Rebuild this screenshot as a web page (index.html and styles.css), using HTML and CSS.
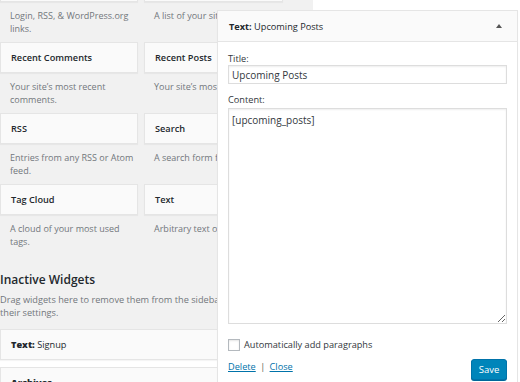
FILE: index.html
```html
<!DOCTYPE html>
<html lang="en">
<head>
  <meta charset="UTF-8" />
  <meta name="viewport" content="width=device-width, initial-scale=1.0" />
  <title>Widgets</title>
  <link rel="stylesheet" href="styles.css">
</head>
<body>
  <div class="page">
    <div class="widgets-area">
      <div class="widget-grid">
        <div class="widget">
          <div class="widget-top">Meta</div>
          <p class="widget-desc">Login, RSS, &amp; WordPress.org links.</p>
        </div>
        <div class="widget">
          <div class="widget-top">Pages</div>
          <p class="widget-desc">A list of your site’s Pages.</p>
        </div>
        <div class="widget">
          <div class="widget-top">Recent Comments</div>
          <p class="widget-desc">Your site’s most recent comments.</p>
        </div>
        <div class="widget">
          <div class="widget-top">Recent Posts</div>
          <p class="widget-desc">Your site’s most recent Posts.</p>
        </div>
        <div class="widget">
          <div class="widget-top">RSS</div>
          <p class="widget-desc">Entries from any RSS or Atom feed.</p>
        </div>
        <div class="widget">
          <div class="widget-top">Search</div>
          <p class="widget-desc">A search form for your site.</p>
        </div>
        <div class="widget">
          <div class="widget-top">Tag Cloud</div>
          <p class="widget-desc">A cloud of your most used tags.</p>
        </div>
        <div class="widget">
          <div class="widget-top">Text</div>
          <p class="widget-desc">Arbitrary text or HTML.</p>
        </div>
      </div>

      <div class="inactive">
        <h2>Inactive Widgets</h2>
        <p class="inactive-desc">Drag widgets here to remove them from the sidebar but keep their settings.</p>
        <div class="widget-top inactive-item"><strong>Text:</strong>&nbsp;<span class="in-title">Signup</span></div>
        <div class="widget-top inactive-item"><strong>Archives</strong></div>
      </div>
    </div>

    <div class="edit-panel">
      <div class="panel-head">
        <span><strong>Text:</strong> <span class="in-title">Upcoming Posts</span></span>
        <span class="arrow"></span>
      </div>
      <div class="panel-body">
        <label class="field-label" for="title">Title:</label>
        <input class="field-input" id="title" type="text" value="Upcoming Posts" />
        <label class="field-label content-label" for="content">Content:</label>
        <textarea class="field-area" id="content">[upcoming_posts]</textarea>
        <label class="auto-p"><input type="checkbox" class="check" /> Automatically add paragraphs</label>
        <div class="panel-actions">
          <div class="links"><a href="#">Delete</a> <span class="sep">|</span> <a href="#">Close</a></div>
          <button class="save-btn">Save</button>
        </div>
      </div>
    </div>
  </div>
</body>
</html>
```

FILE: styles.css
```css
body {
  margin: 0;
  background: #fff;
  font-family: "Open Sans", "Liberation Sans", sans-serif;
  font-size: 9.2px;
  color: #444;
}

.page {
  position: relative;
  height: 382px;
  overflow: hidden;
}

.widgets-area {
  width: 313px;
  height: 382px;
  background: #f1f1f1;
}

.widget-grid {
  display: grid;
  grid-template-columns: 138px 139px;
  column-gap: 6px;
  margin-top: -29px;
}

.widget-top {
  height: 29px;
  padding: 0 10px;
  display: flex;
  align-items: center;
  background: #fafafa;
  border: 1px solid #e5e5e5;
  box-shadow: 0 1px 1px rgba(0, 0, 0, 0.04);
  font-weight: 600;
  color: #23282d;
}

.widget-desc {
  margin: 0;
  padding: 7px 2px 7px 10px;
  height: 26px;
  line-height: 13px;
  font-size: 9px;
  color: #72777c;
}

.inactive {
  width: 282px;
}

.inactive h2 {
  margin: 16px 0 4px;
  font-size: 12px;
  line-height: 18px;
  font-weight: 600;
  color: #23282d;
}

.inactive-desc {
  margin: 0 0 10px;
  line-height: 13px;
  color: #72777c;
}

.inactive-item {
  margin-bottom: 7px;
}

.in-title {
  font-weight: 400;
}

.edit-panel {
  position: absolute;
  left: 217px;
  top: 10px;
  width: 299px;
  height: 400px;
  background: #fff;
  border: 1px solid #e5e5e5;
  box-shadow: 0 1px 1px rgba(0, 0, 0, 0.04);
}

.panel-head {
  height: 30px;
  padding: 0 15px 0 11px;
  display: flex;
  align-items: center;
  justify-content: space-between;
  background: #fafafa;
  border-bottom: 1px solid #e5e5e5;
  color: #23282d;
}

.arrow {
  width: 0;
  height: 0;
  border-left: 3px solid transparent;
  border-right: 3px solid transparent;
  border-bottom: 4px solid #555;
  margin-top: -1px;
}

.panel-body {
  padding: 10px 10px 0;
  display: flex;
  flex-direction: column;
}

.field-label {
  line-height: 13px;
  color: #32373c;
}

.content-label {
  margin-top: 9px;
  margin-bottom: 2px;
}

.field-input,
.field-area {
  box-sizing: border-box;
  width: 279px;
  margin: 0;
  border: 1px solid #ddd;
  box-shadow: inset 0 1px 2px rgba(0, 0, 0, 0.07);
  font-family: inherit;
  font-size: 10px;
  color: #32373c;
  outline: none;
}

.field-input {
  height: 19px;
  padding: 0 3px;
}

.field-area {
  height: 216px;
  padding: 5px 3px;
  line-height: 13px;
  resize: vertical;
}

.auto-p {
  display: flex;
  align-items: center;
  gap: 4px;
  margin-top: 14px;
  line-height: 13px;
  color: #32373c;
}

.check {
  appearance: none;
  width: 12px;
  height: 12px;
  margin: 0;
  background: #fff;
  border: 1px solid #b4b9be;
  box-shadow: inset 0 1px 2px rgba(0, 0, 0, 0.1);
}

.panel-actions {
  display: flex;
  justify-content: space-between;
  align-items: flex-start;
  margin-top: 8px;
}

.links {
  margin-top: 1px;
  line-height: 13px;
  color: #555;
}

.links a {
  color: #0073aa;
}

.sep {
  margin: 0 2px;
}

.save-btn {
  width: 36px;
  height: 21px;
  padding: 0;
  margin-top: 0;
  background: #0085ba;
  border: 1px solid #0073aa;
  border-radius: 3px;
  box-shadow: 0 1px 0 #006799;
  color: #fff;
  font-family: inherit;
  font-size: 9.5px;
}
```
